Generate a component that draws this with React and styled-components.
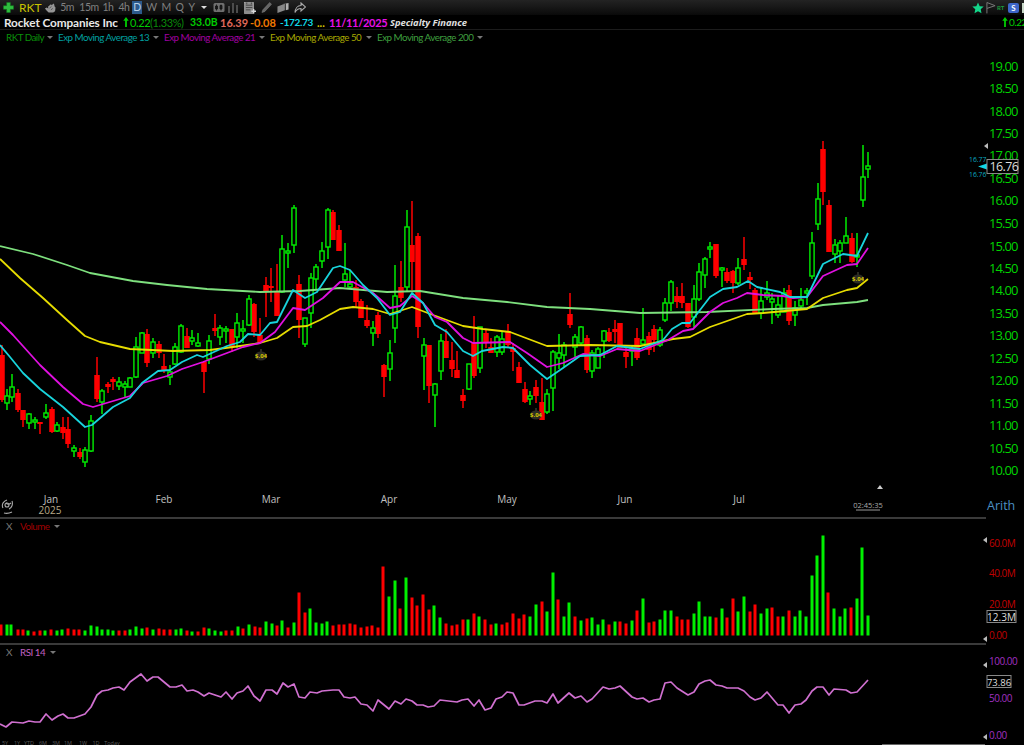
import React from "react";
import styled, { createGlobalStyle } from "styled-components";

const GlobalStyle = createGlobalStyle`
  html, body {
    margin: 0;
    padding: 0;
    background: #000;
  }
  body {
    font-family: Lato, "Open Sans", sans-serif;
  }
`;

const UP = "#00ee00";
const DOWN = "#f00";

// x, wick top, body top, body bottom, wick bottom (page pixels)
const upCandles = [
  [7,389,396,403,410],[12,374,387,397,402],[29,413,414,423,429],[35,417,420,421,429],[46,404,413,417,419],
  [57,422,425,431,432],[74,445,448,451,457],[85,447,450,462,467],[91,415,421,451,452],[102,389,391,402,414],
  [119,377,382,386,390],[125,381,384,387,397],[130,377,378,387,387],[136,337,347,377,378],[142,332,333,353,353],
  [153,338,342,353,358],[170,365,372,377,385],[175,343,347,364,365],[181,324,326,352,353],[192,330,338,341,345],
  [198,333,343,346,347],[209,335,341,359,364],[220,325,328,337,345],[226,326,329,331,343],[237,313,323,337,348],
  [243,320,329,331,343],[249,295,299,325,326],[282,235,249,292,293],[288,243,251,253,268],[294,205,208,245,253],
  [305,318,318,344,347],[311,273,278,313,328],[316,264,267,279,290],[322,242,251,261,268],[328,208,210,247,259],
  [345,243,274,280,287],[350,270,284,287,288],[373,321,328,333,346],[390,340,353,369,381],[395,265,296,328,343],
  [407,210,227,287,292],[424,338,345,356,390],[435,383,384,395,427],[441,334,341,371,380],[469,364,364,389,390],
  [480,327,327,368,373],[497,335,337,352,357],[502,332,339,352,355],[530,391,396,399,405],[547,389,394,412,414],
  [553,350,352,388,411],[559,334,353,358,369],[564,342,345,355,367],[575,334,337,347,357],[581,326,327,343,345],
  [592,350,353,371,378],[598,347,349,368,368],[604,330,331,341,358],[632,345,349,350,366],[643,308,340,344,345],
  [660,327,330,345,347],[665,298,303,320,322],[671,280,282,303,311],[694,285,299,317,327],[699,263,272,299,301],
  [705,257,259,275,288],[710,242,247,249,258],[722,267,268,270,287],[738,258,268,283,285],[761,288,301,313,319],
  [767,281,293,297,300],[772,293,299,302,324],[778,296,305,315,318],[784,288,293,312,312],[795,301,308,315,326],
  [801,288,300,306,308],[807,288,291,292,305],[812,232,243,276,279],[818,183,199,224,230],[835,239,245,254,263],
  [840,240,243,251,263],[846,217,236,243,243],[857,233,255,256,267],[863,145,177,200,207],[868,152,166,169,178],
];

const downCandles = [
  [2,345,355,400,402],[18,389,393,410,412],[23,410,410,420,427],[40,422,422,424,434],[52,407,409,432,433],
  [63,417,427,433,439],[68,417,429,444,448],[80,448,452,457,459],[97,357,375,399,402],[108,382,384,387,393],
  [113,377,379,382,390],[147,329,334,363,367],[159,341,344,353,358],[164,354,366,370,373],[187,328,336,348,348],
  [204,362,362,372,393],[215,314,328,331,336],[232,329,329,347,352],[254,303,304,332,337],[260,318,335,342,342],
  [266,277,285,291,317],[271,268,286,288,302],[277,264,291,316,316],[299,275,284,320,338],[333,210,212,240,240],
  [339,225,230,251,251],[356,280,287,302,307],[361,299,301,318,318],[367,305,320,326,328],[378,312,315,334,338],
  [384,364,365,377,397],[401,261,287,298,302],[412,201,245,262,290],[418,233,236,327,338],[429,345,345,386,403],
  [446,329,341,358,358],[452,342,360,369,377],[457,351,370,378,378],[463,389,395,401,408],[474,316,343,376,378],
  [486,330,333,343,348],[491,338,347,353,353],[508,324,331,345,347],[513,343,348,352,371],[519,362,367,383,383],
  [525,382,389,402,403],[536,380,387,396,403],[542,378,402,420,420],[570,293,314,325,328],[587,335,338,370,373],
  [609,328,332,341,342],[615,320,329,332,343],[620,323,323,348,348],[626,347,352,357,368],[637,328,338,358,360],
  [649,332,336,350,355],[654,325,329,340,352],[677,287,296,302,308],[682,283,296,303,308],[688,303,303,327,328],
  [716,244,244,276,278],[727,268,272,281,283],[733,270,271,283,293],[744,237,259,265,270],[750,272,277,280,289],
  [755,288,290,313,313],[789,285,290,321,325],[823,141,149,192,205],[829,200,205,252,252],[852,233,238,262,263],
];

const ema200 = "0,246 33,254 67,265 90,273 133,281 167,285 207,289 260,292 300,291 340,288 387,292 420,291 463,298 507,302 547,307 590,309 640,313 707,312 773,309 807,308 823,305 857,302 868,300";
const ema50 = "0,259 20,278 43,298 67,320 85,336 100,342 130,349 173,351 210,350 233,347 260,343 277,338 293,327 307,326 320,320 340,309 353,307 373,309 390,314 412,307 433,315 463,326 483,329 510,332 547,346 590,345 640,346 673,339 690,337 710,327 747,314 763,313 807,309 823,298 847,290 857,288 868,279";
const ema21 = "0,322 13,335 40,365 63,387 83,404 93,407 130,396 143,383 167,376 182,369 203,362 227,353 243,347 260,343 275,332 293,308 305,310 323,298 340,282 353,282 373,293 390,308 400,306 412,296 423,303 435,317 447,322 463,338 473,343 510,342 527,353 547,367 563,363 583,354 600,356 617,349 640,351 668,340 683,331 693,329 710,312 723,303 737,298 747,293 763,295 783,296 793,298 807,297 823,276 847,265 857,264 868,248";
const ema13 = "0,345 10,357 23,373 40,389 63,407 85,427 92,425 113,407 130,398 142,383 158,371 170,370 182,362 197,355 203,357 227,346 240,342 248,334 260,335 270,323 277,322 293,290 305,298 317,292 333,268 340,266 350,270 363,285 377,298 390,315 400,312 412,293 423,303 435,325 447,332 463,351 473,356 482,351 503,347 513,348 530,365 547,379 563,368 580,356 600,355 617,346 640,349 663,340 672,329 682,323 690,323 710,297 723,289 737,287 748,281 757,287 780,292 790,297 807,297 823,264 843,254 857,256 868,233";
const rsi = "0,724 6,727 12,722 23,723 29,721 35,722 40,722 46,714 52,720 58,716 63,714 68,718 74,718 85,714 91,707 97,695 102,691 108,690 113,688 119,687 124,690 130,682 141,674 147,681 153,677 158,677 170,687 176,687 182,685 187,691 193,690 198,692 204,696 209,693 215,695 221,697 226,692 232,699 237,693 243,691 248,686 254,696 260,701 266,690 272,690 277,694 283,683 288,687 294,684 299,697 305,698 310,692 317,693 322,691 333,690 339,690 344,697 350,698 355,697 361,704 367,705 373,711 378,700 389,709 395,701 401,704 406,699 412,701 417,705 423,705 428,707 434,706 440,700 457,702 462,700 468,699 474,706 479,700 485,710 491,708 496,699 502,697 507,692 513,693 519,705 524,705 535,701 542,701 547,703 553,694 558,703 569,693 575,698 581,696 587,702 592,699 603,687 609,689 615,688 620,686 632,697 637,699 643,698 649,702 654,700 660,699 665,683 671,682 677,688 688,695 694,692 699,684 705,681 710,680 716,685 722,686 727,688 738,688 744,691 750,697 755,700 761,698 767,692 778,705 783,705 789,713 795,705 801,704 806,700 812,691 817,687 823,687 829,695 834,689 846,690 851,693 857,692 868,680";

// x, height, up
const volumes = [
  [1,11,0],[7,11,1],[11,11,1],[18,6,0],[23,6,0],[28,5,1],[34,4,0],[40,5,0],[45,5,1],[51,6,0],[57,5,1],[62,6,1],[68,7,0],[74,6,0],[79,6,0],[85,5,1],[91,10,1],[97,9,1],[102,6,1],[108,6,1],[113,5,1],[119,5,0],[125,5,0],[130,6,1],[136,9,1],[142,7,1],[147,8,0],[153,6,1],[159,7,0],[164,6,0],[170,6,0],[176,6,1],[181,7,1],[187,5,0],[192,4,1],[198,4,0],[204,8,0],[209,7,1],[215,5,1],[221,4,1],[226,5,0],[232,5,0],[238,9,1],[243,7,0],[249,11,1],[255,9,0],[260,8,0],[266,14,1],[272,12,1],[277,10,0],[282,15,1],[288,8,0],[294,13,1],
  [299,43,0],[305,23,0],[310,27,1],[316,13,1],[322,12,1],[327,14,1],[333,10,0],[339,11,0],[344,11,0],[350,12,0],[355,11,0],[361,8,0],[367,9,0],[372,10,0],[378,8,0],[383,69,0],[389,39,1],[395,55,1],[400,27,0],[406,58,1],[412,38,0],[417,30,0],[423,41,0],[429,26,0],[434,30,1],[440,18,1],[446,12,0],[452,10,0],[457,11,0],[463,16,0],[468,16,1],[474,22,0],[479,19,1],[485,16,0],[491,11,0],[496,12,1],[502,11,0],[507,13,0],[513,22,0],[519,17,0],[524,21,0],[530,19,1],[536,31,1],[542,34,0],[547,24,1],
  [553,63,1],[558,36,0],[564,19,1],[569,33,1],[575,19,0],[581,15,1],[587,17,0],[592,18,1],[598,11,1],[603,16,1],[609,11,0],[615,14,1],[620,14,0],[626,12,0],[632,15,1],[637,25,0],[643,37,1],[649,13,0],[654,14,0],[660,16,1],[665,25,1],[671,25,1],[677,19,0],[682,16,0],[688,16,0],[694,22,1],[699,34,1],[705,19,1],[710,19,1],[716,18,0],[722,27,1],[727,18,0],[733,37,0],[738,24,1],[744,39,1],[750,24,0],[755,31,0],[761,22,1],[767,27,1],[772,28,0],[778,19,0],
  [783,19,1],[789,25,0],[795,19,1],[800,25,1],[806,19,1],[812,60,1],[817,80,1],[823,100,1],[828,43,0],[834,27,1],[840,19,1],[845,27,1],[851,28,0],[857,37,1],[862,88,1],[868,20,1],
];

const priceTicks = [
  ["19.00",66],["18.50",88.5],["18.00",111],["17.50",133.5],["17.00",155],["16.50",178],["16.00",200],["15.50",223],["15.00",246],["14.50",268],
  ["14.00",290],["13.50",313],["13.00",335],["12.50",358],["12.00",380],["11.50",403],["11.00",425],["10.50",448],["10.00",470],
];
const months = [["Jan",51],["Feb",164],["Mar",271],["Apr",389],["May",507],["Jun",625],["Jul",739]];
const dividends = [[261,356],[536,415],[858,279]];
const ranges = [["5Y",5],["1Y",17],["YTD",29],["6M",43],["3M",56],["1M",68],["1W",83],["1D",96],["Today",112]];
const periods = [
  { label: "5m", w: 22 }, { label: "15m", w: 22 }, { label: "1h", w: 16 }, { label: "4h", w: 16 },
  { label: "D", w: 10, active: true }, { label: "W", w: 19 }, { label: "M", w: 10 }, { label: "Q", w: 17 }, { label: "Y", w: 7 },
];

const Page = styled.div`
  width: 1024px;
  height: 745px;
  overflow: hidden;
  background: #000;
  display: flex;
  flex-direction: column;
`;

const Toolbar = styled.div`
  height: 16px;
  display: flex;
  align-items: center;
  justify-content: space-between;
  background: linear-gradient(#232323, #0a0a0a);
`;

const ToolGroup = styled.div`
  display: flex;
  align-items: center;
`;

const ToolIcon = styled.svg`
  flex-shrink: 0;
  margin-left: ${p => p.$ml || 0}px;
`;

const Ticker = styled.span`
  width: 24px;
  margin-left: 5px;
  color: #c9c400;
  font-size: 12px;
`;

const Period = styled.span`
  width: ${p => p.$w}px;
  height: 13px;
  line-height: 13px;
  text-align: center;
  font-size: 10.5px;
  letter-spacing: -0.5px;
  color: ${p => (p.$active ? "#b8d0e8" : "#808080")};
  background: ${p => (p.$active ? "#2c5a8c" : "transparent")};
`;

const InfoRow = styled.div`
  height: 14px;
  display: flex;
  align-items: center;
  justify-content: space-between;
  border-bottom: 1px solid #1c1c1c;
  white-space: nowrap;
`;

const Company = styled.span`
  width: 119px;
  flex-shrink: 0;
  padding-left: 4px;
  box-sizing: border-box;
  font-size: 11.8px;
  font-weight: 700;
  letter-spacing: -0.1px;
  color: #e8e8e8;
`;

const Stat = styled.span`
  color: ${p => p.$color};
  font-size: ${p => p.$size || 11.5}px;
  font-weight: ${p => p.$weight || 700};
  margin-left: ${p => p.$gap || 0}px;
  width: ${p => p.$w}px;
  flex-shrink: 0;
  letter-spacing: ${p => p.$track || 0}px;
`;

const Sector = styled.span`
  margin-left: 5px;
  font-family: "Open Sans", sans-serif;
  font-size: 9.4px;
  font-weight: 700;
  font-style: italic;
  color: #e0e0e0;
`;

const ClippedChange = styled.span`
  width: 22px;
  flex-shrink: 0;
  overflow: hidden;
  display: flex;
  align-items: center;
  gap: 1px;
  color: #0c0;
  font-size: 10px;
  letter-spacing: -0.5px;
`;

const EdgeStub = styled.span`
  width: 2px;
  height: 10px;
  margin-left: 3px;
  background: #c8d8c8;
`;

const Legend = styled.div`
  height: 14px;
  display: flex;
  align-items: center;
  padding-left: 6px;
  white-space: nowrap;
`;

const LegendItem = styled.span`
  width: ${p => p.$w}px;
  flex-shrink: 0;
  color: ${p => p.$color};
  font-size: 9.8px;
  letter-spacing: -0.5px;
`;

const Caret = styled.i`
  display: inline-block;
  flex-shrink: 0;
  width: 0;
  height: 0;
  margin: 0 ${p => p.$right ?? 5}px 0 ${p => p.$left ?? 4}px;
  border-left: 3px solid transparent;
  border-right: 3px solid transparent;
  border-top: 3px solid ${p => p.$color || "#777"};
`;

const Pane = styled.div`
  position: relative;
  height: ${p => p.$height}px;
  flex-shrink: 0;
`;

const PaneLabel = styled.div`
  position: absolute;
  left: 6px;
  top: 1px;
  display: flex;
  align-items: center;
  font-size: 10px;
`;

const CloseX = styled.span`
  width: 14px;
  color: #777;
`;

const Divider = styled.div`
  width: 986px;
  height: 2px;
  background: #3a3a3a;
  flex-shrink: 0;
`;

const Plot = styled.svg`
  display: block;
  width: 1024px;
  height: 100%;
  font-family: "Open Sans", "Noto Sans", sans-serif;
`;

const SBadge = styled.span`
  width: 11px;
  height: 10px;
  margin-left: 4px;
  border-radius: 2px;
  background: #3d66c8;
  color: #fff;
  font-size: 8px;
  font-weight: 700;
  line-height: 10px;
  text-align: center;
`;

const RtTag = styled.span`
  width: 7px;
  margin-left: 1px;
  color: #1c9a3c;
  font-size: 6px;
  font-weight: 700;
`;

const Plus = () => (
  <ToolIcon width="11" height="11" viewBox="0 0 12 12" $ml={3}>
    <path d="M4 0.5h4v3.500h3.500v4H8v3.500H4V8H0.500V4H4z" fill="#2fbf3f" stroke="#157a20" strokeWidth="0.6" />
  </ToolIcon>
);

const HandIcon = () => (
  <ToolIcon width="12" height="12" viewBox="0 0 13 12" $ml={1}>
    <path d="M1 6.500l2-1 1.500 1V4.500l3-2.500 1 1 1.500-2 1 1 .5 2.500 1 1-.5 4-2 1.500H5l-2-2z" fill="#959595" />
    <path d="M6 6l2-1.500M7.500 8l2-1.500" stroke="#333" strokeWidth="0.7" />
  </ToolIcon>
);

const CandleTypeIcon = () => (
  <ToolIcon width="12" height="11" viewBox="0 0 12 11" $ml={6}>
    <rect x="0.5" y="1" width="11" height="9" rx="1.500" fill="#6f6f6f" />
    <path d="M3.500 2.500v6M2.500 4h2v3h-2zM8 2.500v6M7 3.500h2V7H7z" stroke="#111" strokeWidth="0.8" fill="#222" />
  </ToolIcon>
);

const BarsIcon = () => (
  <ToolIcon width="12" height="11" viewBox="0 0 12 11" $ml={2}>
    <path d="M1 4h2v7H1zM5 1h2v10H5zM9 3h2v8H9z" fill="#4c4c4c" />
  </ToolIcon>
);

const CalendarIcon = () => (
  <ToolIcon width="12" height="14" viewBox="0 0 13 14" $ml={5}>
    <rect x="0.5" y="1" width="10" height="12" fill="#8c8c8c" stroke="#bbb" strokeWidth="0.6" />
    <path d="M2 4h7M2 6.500h7M2 9h5M3 1v2M8 1v2" stroke="#333" strokeWidth="0.8" />
    <path d="M10.500 8v5M8 10.500h5" stroke="#d8d8d8" strokeWidth="1.500" />
  </ToolIcon>
);

const PenIcon = () => (
  <ToolIcon width="11" height="13" viewBox="0 0 12 13" $ml={5}>
    <path d="M9.500 1l2 2-7.500 8-3 1 1-3z" fill="#666" stroke="#888" strokeWidth="0.5" />
  </ToolIcon>
);

const NoteIcon = () => (
  <ToolIcon width="12" height="12" viewBox="0 0 13 12" $ml={5}>
    <path d="M0.500 4.500l8-3v7l-8 3z" fill="#888" />
    <path d="M5 2l7.500-1.500v7L9.500 8.500V1.500z" fill="#b0b0b0" />
  </ToolIcon>
);

const ShareIcon = () => (
  <ToolIcon width="12" height="12" viewBox="0 0 12 12" $ml={5}>
    <path d="M7 1l4.500 4L7 9V6.500C4.500 6.500 2.500 7.500 1 10.500 1.200 6.500 3.500 3.500 7 3.500z" fill="none" stroke="#a8a8a8" strokeWidth="1.100" />
  </ToolIcon>
);

const ArrowUp = ({ ml }) => (
  <ToolIcon width="6" height="10" viewBox="0 0 6 11" $ml={ml}>
    <path d="M3 0L6 4H4v7H2V4H0z" fill="#0c0" />
  </ToolIcon>
);

const StarIcon = () => (
  <ToolIcon width="12" height="12" viewBox="0 0 24 24">
    <path d="M12 1l3.400 7.300 7.900.9-5.900 5.400 1.600 7.900L12 18.600l-7 3.900 1.600-7.900L.7 9.200l7.900-.9z" fill="#14d68a" />
  </ToolIcon>
);

const FlagIcon = () => (
  <ToolIcon width="10" height="13" viewBox="0 0 11 13" $ml={2}>
    <path d="M1 13V1l9 3.500L1 7.500" fill="none" stroke="#777" strokeWidth="1.100" />
  </ToolIcon>
);

const Candles = () => (
  <>
    {downCandles.map(([x, a, b, c, d]) => (
      <g key={x}>
        <line x1={x} x2={x} y1={a} y2={d} stroke={DOWN} strokeWidth="1.500" />
        <rect x={x - 2.750} y={b} width="5.500" height={Math.max(c - b, 2)} fill={DOWN} />
      </g>
    ))}
    {upCandles.map(([x, a, b, c, d]) => (
      <g key={x}>
        <line x1={x} x2={x} y1={a} y2={d} stroke={UP} strokeWidth="1.500" />
        <rect x={x - 2.100} y={b} width="4.200" height={Math.max(c - b, 2)} fill="#000" stroke={UP} strokeWidth="1.400" />
      </g>
    ))}
  </>
);

const Emas = () => (
  <g fill="none" strokeWidth="1.800" strokeLinejoin="round">
    <polyline points={ema200} stroke="#7ee07e" />
    <polyline points={ema50} stroke="#e6dc00" />
    <polyline points={ema21} stroke="#e010e0" />
    <polyline points={ema13} stroke="#18d4dc" />
  </g>
);

const Dividend = ({ x, y }) => (
  <g>
    <line x1={x} x2={x} y1={y - 7} y2={y - 4} stroke="#554" />
    <ellipse cx={x} cy={y} rx="6" ry="4.500" fill="#2c2c24" />
    <text x={x} y={y + 2} fontSize="6" fontWeight="700" fill="#d8c800" textAnchor="middle">$.04</text>
  </g>
);

const AxisMark = ({ x, y, color = "#bbb" }) => (
  <path d={`M${x} ${y}l4 -3v6z`} fill={color} />
);

const ValueBox = ({ x, y, w, label, size = 10 }) => (
  <g>
    <rect x={x} y={y} width={w} height="12" fill="#000" stroke="#888" />
    <text x={x + w / 2} y={y + 10} fontSize={size} fill="#ddd" textAnchor="middle">{label}</text>
  </g>
);

const AxisText = ({ y, color, size = 10, spacing = -0.500, children }) => (
  <text x="989" y={y} fill={color} fontSize={size} letterSpacing={spacing}>{children}</text>
);

const PricePlot = () => (
  <Plot viewBox="0 44 1024 473">
    <Candles />
    <Emas />
    {dividends.map(([x, y]) => <Dividend key={x} x={x} y={y} />)}
    {priceTicks.map(([label, y]) => (
      <AxisText key={label} y={y + 4.500} color="#00d400" size={13} spacing={-0.900}>{label}</AxisText>
    ))}
    <AxisMark x={984} y={146} />
    <text x="969" y="162" fontSize="6.800" fill="#0aa8c0">16.77</text>
    <text x="969" y="177" fontSize="6.800" fill="#0aa8c0">16.76</text>
    <path d="M978 166.500l9 -3v6z" fill="#10d8e8" />
    <rect x="987" y="159.500" width="31" height="14" fill="#000" stroke="#888" />
    <text x="989.500" y="171" fontSize="12.500" fill="#ddd" letterSpacing="-0.600">16.76</text>
    {months.map(([label, x]) => (
      <text key={label} x={x} y="503" fontSize="10" fill="#c0c0c0" textAnchor="middle">{label}</text>
    ))}
    <text x="50" y="514" fontSize="10" fill="#b8a888" textAnchor="middle">2025</text>
    <g fill="none" stroke="#aaa" strokeWidth="1.100">
      <path d="M3 508c-2 -4 1 -7 4 -8M12 501c1 3 0 7 -3 8M6 503c2 2 4 1 5 0M4 513c3 1 6 0 8 -1" />
      <circle cx="7" cy="505" r="2" />
    </g>
    <path d="M880 485l3 4h-6z" fill="#ccc" />
    <text x="868" y="508" fontSize="7.500" fill="#aaa" textAnchor="middle">02:45:35</text>
    <line x1="856" x2="880" y1="510" y2="510" stroke="#999" />
    <text x="987" y="510" fontSize="12.500" fill="#4b90c4">Arith</text>
  </Plot>
);

const VolumePlot = () => (
  <Plot viewBox="0 519 1024 124">
    {volumes.map(([x, h, up]) => (
      <rect key={x} x={x - 1.500} y={635.500 - h} width="3" height={h} fill={up ? "#00f000" : DOWN} />
    ))}
    <AxisMark x={983} y={540} />
    <AxisMark x={983} y={639} />
    <AxisText y={547} color="#c00000">60.0M</AxisText>
    <AxisText y={577} color="#c00000">40.0M</AxisText>
    <AxisText y={608} color="#c00000">20.0M</AxisText>
    <AxisText y={639} color="#c00000">0.00</AxisText>
    <ValueBox x={987} y={610.500} w={29} label="12.3M" />
  </Plot>
);

const RsiPlot = () => (
  <Plot viewBox="0 645 1024 100">
    <polyline points={rsi} fill="none" stroke="#d070d0" strokeWidth="1.700" strokeLinejoin="round" />
    <AxisMark x={983} y={665} />
    <AxisMark x={983} y={737} />
    <AxisText y={665} color="#a030c0">100.00</AxisText>
    <AxisText y={702} color="#a030c0">50.00</AxisText>
    <AxisText y={739} color="#a030c0">0.00</AxisText>
    <ValueBox x={987} y={675.500} w={24} label="73.86" size={9.500} />
    {ranges.map(([label, x]) => (
      <text key={label} x={x} y="744.500" fontSize="5.500" fill="#5c5c5c" textAnchor="middle">{label}</text>
    ))}
    <line x1="882" x2="985" y1="744.500" y2="744.500" stroke="#666" />
  </Plot>
);

const App = () => {
  return (
    <Page>
      <GlobalStyle />
      <Toolbar>
        <ToolGroup>
          <Plus />
          <Ticker>RKT</Ticker>
          <HandIcon />
          {periods.map(p => (
            <Period key={p.label} $w={p.w} $active={p.active}>{p.label}</Period>
          ))}
          <Caret $color="#ddd" $left={6} $right={0} />
          <CandleTypeIcon />
          <BarsIcon />
          <CalendarIcon />
          <PenIcon />
          <NoteIcon />
          <ShareIcon />
        </ToolGroup>
        <ToolGroup>
          <StarIcon />
          <FlagIcon />
          <RtTag>RT</RtTag>
          <SBadge>S</SBadge>
          <EdgeStub />
        </ToolGroup>
      </Toolbar>
      <InfoRow>
        <ToolGroup>
          <Company>Rocket Companies Inc</Company>
          <ArrowUp ml={4} />
          <Stat $color="#0c0" $weight={400} $size={11} $gap={1} $w={20} $track={-0.4}>0.22</Stat>
          <Stat $color="#0a8a0a" $weight={400} $size={11} $w={40} $track={-0.4}>(1.33%)</Stat>
          <Stat $color="#0c0" $size={10.5} $w={30}>33.0B</Stat>
          <Stat $color="#e06a5a" $size={11} $w={30}>16.39</Stat>
          <Stat $color="#f07800" $size={11} $w={30}>-0.08</Stat>
          <Stat $color="#10d8e8" $size={10} $w={37} $track={-0.3}>-172.73</Stat>
          <Stat $color="#d8c800" $size={11} $w={12}>...</Stat>
          <Stat $color="#e810e8" $size={11} $w={56} $track={-0.3}>11/11/2025</Stat>
          <Sector>Specialty Finance</Sector>
        </ToolGroup>
        <ClippedChange>
          <ArrowUp />
          0.22
        </ClippedChange>
      </InfoRow>
      <Legend>
        <LegendItem $w={41} $color="#0a900a">RKT Daily</LegendItem>
        <Caret $left={0} />
        <LegendItem $w={95} $color="#00a0a0">Exp Moving Average 13</LegendItem>
        <Caret $left={0} />
        <LegendItem $w={95} $color="#a000a0">Exp Moving Average 21</LegendItem>
        <Caret $left={0} />
        <LegendItem $w={96} $color="#a8a800">Exp Moving Average 50</LegendItem>
        <Caret $left={0} />
        <LegendItem $w={100} $color="#3f9f3f">Exp Moving Average 200</LegendItem>
        <Caret $left={0} />
      </Legend>
      <Pane $height={473}>
        <PricePlot />
      </Pane>
      <Divider />
      <Pane $height={124}>
        <PaneLabel>
          <CloseX>X</CloseX>
          <LegendItem $color="#a00000">Volume</LegendItem>
          <Caret $left={5} />
        </PaneLabel>
        <VolumePlot />
      </Pane>
      <Divider />
      <Pane $height={100}>
        <PaneLabel>
          <CloseX>X</CloseX>
          <LegendItem $color="#c060c0">RSI 14</LegendItem>
          <Caret $left={5} />
        </PaneLabel>
        <RsiPlot />
      </Pane>
    </Page>
  );
};

export default App;
